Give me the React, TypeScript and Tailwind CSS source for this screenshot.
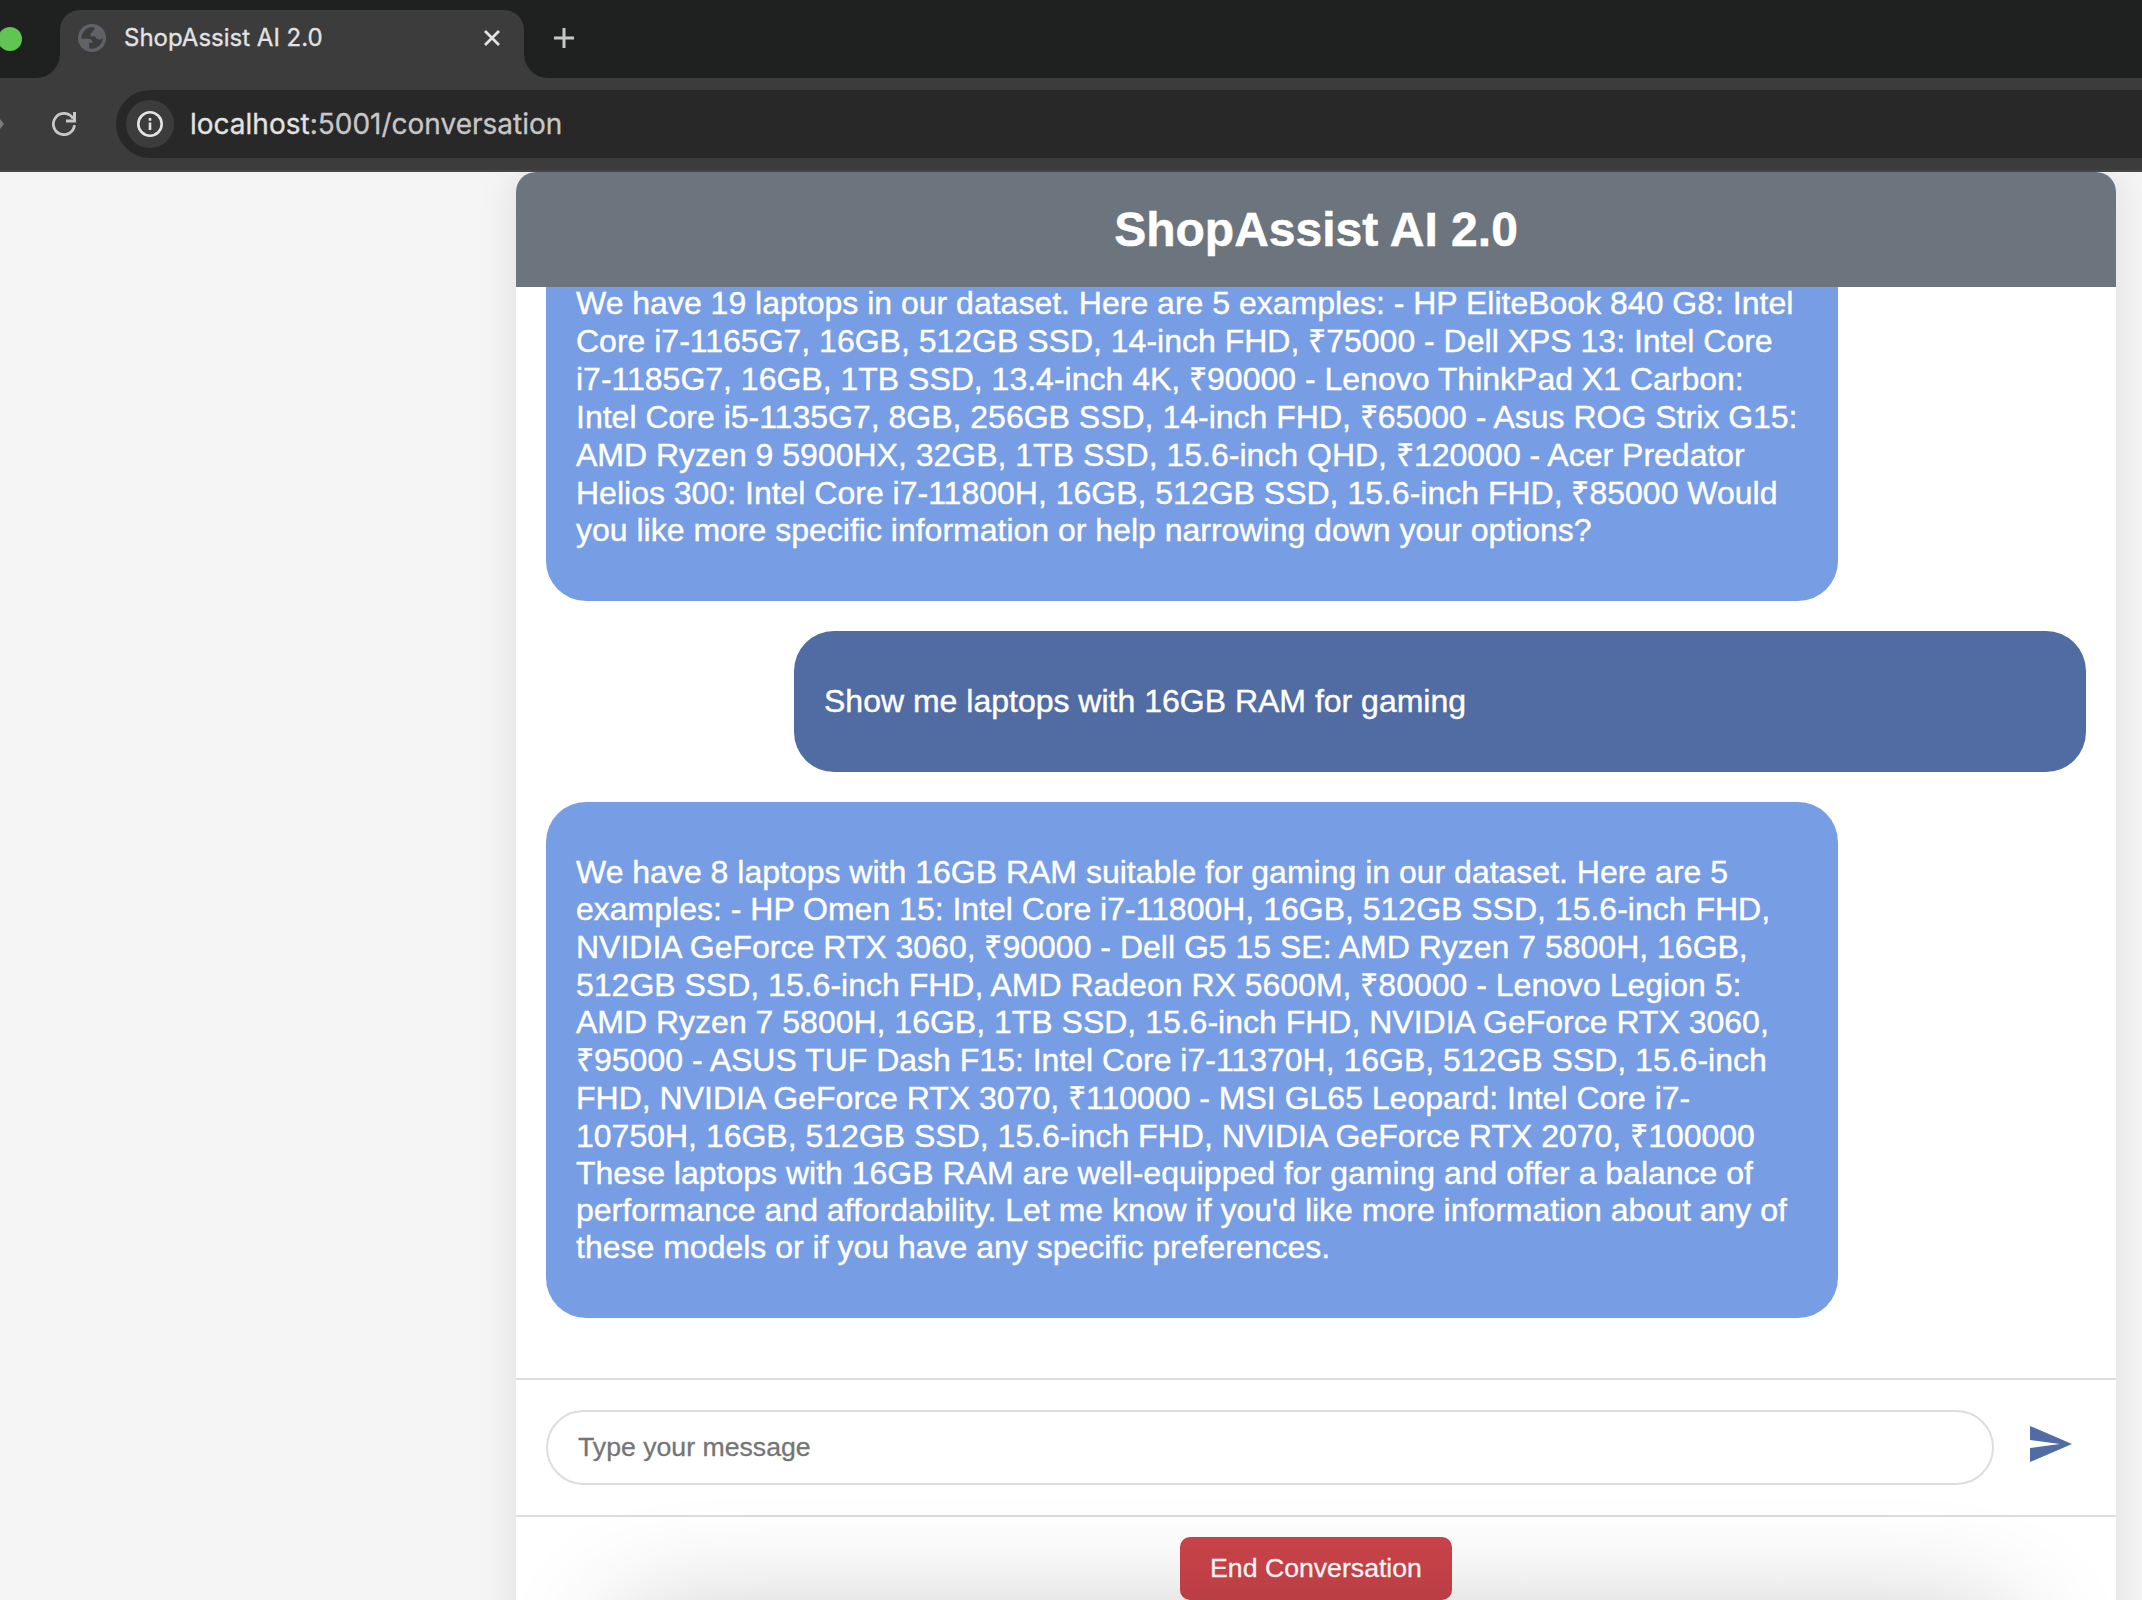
const firstReply: [string, number][] = [
  ["We have 19 laptops in our dataset. Here are 5 examples: - HP EliteBook 840 G8: Intel", 38],
  ["Core i7-1165G7, 16GB, 512GB SSD, 14-inch FHD, ₹75000 - Dell XPS 13: Intel Core", 38],
  ["i7-1185G7, 16GB, 1TB SSD, 13.4-inch 4K, ₹90000 - Lenovo ThinkPad X1 Carbon:", 38],
  ["Intel Core i5-1135G7, 8GB, 256GB SSD, 14-inch FHD, ₹65000 - Asus ROG Strix G15:", 38],
  ["AMD Ryzen 9 5900HX, 32GB, 1TB SSD, 15.6-inch QHD, ₹120000 - Acer Predator", 38],
  ["Helios 300: Intel Core i7-11800H, 16GB, 512GB SSD, 15.6-inch FHD, ₹85000 Would", 38],
  ["you like more specific information or help narrowing down your options?", 37],
];

const secondReply: [string, number][] = [
  ["We have 8 laptops with 16GB RAM suitable for gaming in our dataset. Here are 5", 37],
  ["examples: - HP Omen 15: Intel Core i7-11800H, 16GB, 512GB SSD, 15.6-inch FHD,", 37],
  ["NVIDIA GeForce RTX 3060, ₹90000 - Dell G5 15 SE: AMD Ryzen 7 5800H, 16GB,", 38],
  ["512GB SSD, 15.6-inch FHD, AMD Radeon RX 5600M, ₹80000 - Lenovo Legion 5:", 38],
  ["AMD Ryzen 7 5800H, 16GB, 1TB SSD, 15.6-inch FHD, NVIDIA GeForce RTX 3060,", 37],
  ["₹95000 - ASUS TUF Dash F15: Intel Core i7-11370H, 16GB, 512GB SSD, 15.6-inch", 38],
  ["FHD, NVIDIA GeForce RTX 3070, ₹110000 - MSI GL65 Leopard: Intel Core i7-", 38],
  ["10750H, 16GB, 512GB SSD, 15.6-inch FHD, NVIDIA GeForce RTX 2070, ₹100000", 38],
  ["These laptops with 16GB RAM are well-equipped for gaming and offer a balance of", 37],
  ["performance and affordability. Let me know if you'd like more information about any of", 37],
  ["these models or if you have any specific preferences.", 37],
];

function Lines({ lines }: { lines: [string, number][] }) {
  return (
    <>
      {lines.map(([text, height]) => (
        <p key={text} className="whitespace-nowrap" style={{ height, lineHeight: `${height}px` }}>
          {text}
        </p>
      ))}
    </>
  );
}

function BrowserChrome() {
  return (
    <header className="h-[172px] shrink-0 border-b-2 border-[#474747] bg-[#3c3c3c] font-[Inter,sans-serif]">
      <div className="flex h-[78px] bg-[#1f2120]">
        <div className="flex w-[36px] items-start overflow-hidden">
          <div className="-ml-[2px] mt-[27px] size-6 shrink-0 rounded-full bg-[#61c554]" />
        </div>
        <div className="flex w-6 items-end bg-[#3c3c3c]">
          <div className="h-full w-6 rounded-br-[24px] bg-[#1f2120]" />
        </div>
        <div className="w-[464px] bg-[#1f2120] pt-[10px]">
          <div className="flex h-[68px] items-start rounded-t-[20px] bg-[#3c3c3c] pl-[18px] pt-[14px]">
            <svg viewBox="0 0 28 28" className="size-7 shrink-0">
              <circle cx="14" cy="14" r="14" fill="#5f6368" />
              <path
                d="M15.500 3C9 2.500 3.400 7.500 3.200 14.800H9.500C13 14.800 14.500 16 14.500 18.800H11.200V24.600C18.500 26 25 20.500 24.800 13.200C24 15 22.500 15.800 20.500 15.500C18.500 15.200 17.800 14.200 17.500 12.600H12.500V10.500C12.500 9.200 13.200 8.800 14.500 8.800C14.300 7 15 6.200 16.500 5.800C16.800 4.500 16.500 3.500 15.500 3Z"
                fill="#3c3c3c"
              />
            </svg>
            <span className="ml-[18px] text-[24px] leading-7 text-[#e3e3e3] [-webkit-text-stroke:0.3px_#e3e3e3]">
              ShopAssist AI 2.0
            </span>
            <svg
              viewBox="0 0 16 16"
              className="ml-auto mr-[24px] mt-[6px] size-4 overflow-visible"
              stroke="#e3e3e3"
              strokeWidth="2.800"
            >
              <path d="M1 1l14 14M15 1L1 15" />
            </svg>
          </div>
        </div>
        <div className="w-6 bg-[#3c3c3c]">
          <div className="h-full w-6 rounded-bl-[24px] bg-[#1f2120]" />
        </div>
        <svg viewBox="0 0 20 20" className="ml-[6px] mt-[28px] size-5" stroke="#c7c7c7" strokeWidth="3">
          <path d="M10 0v20M0 10h20" />
        </svg>
      </div>
      <div className="flex h-[92px] items-center">
        <svg viewBox="0 0 4 10" className="h-[10px] w-1" fill="#7b7b7b">
          <path d="M0 0l4 5-4 5z" />
        </svg>
        <svg viewBox="0 0 24 24" className="ml-[48px] size-6" fill="none" stroke="#c7c7c7" strokeWidth="2.800">
          <path d="M21 6.500A10.600 10.600 0 1 0 22.500 13.200" />
          <path d="M24 0v10.500H14V7.500h7V0z" fill="#c7c7c7" stroke="none" />
        </svg>
        <div className="ml-[40px] flex h-[68px] flex-1 items-center rounded-l-[34px] bg-[#282828] pl-[10px]">
          <div className="flex size-12 items-center justify-center rounded-full bg-[#3c3c3c]">
            <svg viewBox="0 0 26 26" className="size-[26px]" fill="none" stroke="#e3e3e3" strokeWidth="2.600">
              <circle cx="13" cy="13" r="11.700" />
              <path d="M13 11.500v7.500M13 7v2.800" />
            </svg>
          </div>
          <span className="ml-[16px] text-[28px] leading-9 text-[#c7c7c7] [-webkit-text-stroke:0.3px_currentColor]">
            <span className="text-[#e3e3e3]">localhost</span>:5001/conversation
          </span>
        </div>
      </div>
    </header>
  );
}

export default function App() {
  return (
    <div className="relative flex h-[1600px] w-[2142px] flex-col overflow-hidden bg-[#f5f5f5]">
      <BrowserChrome />
      <div className="flex-1 overflow-hidden pl-[516px] font-['Liberation_Sans',Arial,sans-serif]">
        <main className="flex h-[1460px] w-[1600px] flex-col rounded-t-[20px] bg-white shadow-[0_0_40px_rgba(0,0,0,0.1)]">
          <div className="flex h-[115px] shrink-0 items-center justify-center rounded-t-[20px] bg-[#6c757d]">
            <h1 className="text-[48px] font-bold leading-[55px] text-white [-webkit-text-stroke:0.5px_white]">
              ShopAssist AI 2.0
            </h1>
          </div>
          <div className="flex h-[1091px] shrink-0 flex-col gap-[30px] px-[30px] text-[32px] text-white [-webkit-text-stroke:0.4px_white]">
            <div className="h-[314px] w-[1292px] rounded-b-[40px] bg-[#779de4] px-[30px]">
              <div className="-mt-[3px]">
                <Lines lines={firstReply} />
              </div>
            </div>
            <div className="flex h-[141px] w-[1292px] items-center self-end rounded-[40px] bg-[#516ca3] px-[30px]">
              <p className="leading-[37px]">Show me laptops with 16GB RAM for gaming</p>
            </div>
            <div className="h-[516px] w-[1292px] rounded-[40px] bg-[#779de4] px-[30px] pt-[52px]">
              <Lines lines={secondReply} />
            </div>
          </div>
          <div className="flex h-[139px] shrink-0 items-center border-y-2 border-[#dddddd] pl-[30px]">
            <input
              placeholder="Type your message"
              className="h-[75px] w-[1448px] rounded-[38px] border-2 border-[#dddddd] bg-white px-[30px] text-[26.670px] placeholder:text-[#757575] [-webkit-text-stroke:0.3px_#757575]"
            />
            <svg viewBox="0 0 42 36" className="mb-[7px] ml-[36px] h-9 w-[42px]" fill="#516ca3">
              <path d="M0 0l42 18L0 36V22l30-4-30-4z" />
            </svg>
          </div>
          <div className="flex justify-center pt-[20px]">
            <button className="h-[63px] w-[272px] rounded-[10px] bg-[#cc444b] pb-[2px] text-[26.670px] text-white [-webkit-text-stroke:0.3px_white]">
              End Conversation
            </button>
          </div>
        </main>
      </div>
      <div className="pointer-events-none absolute left-[620px] top-[1618px] h-[200px] w-[1390px] rounded-[30px] shadow-[0_0_120px_rgba(0,0,0,0.24)]" />
    </div>
  );
}
